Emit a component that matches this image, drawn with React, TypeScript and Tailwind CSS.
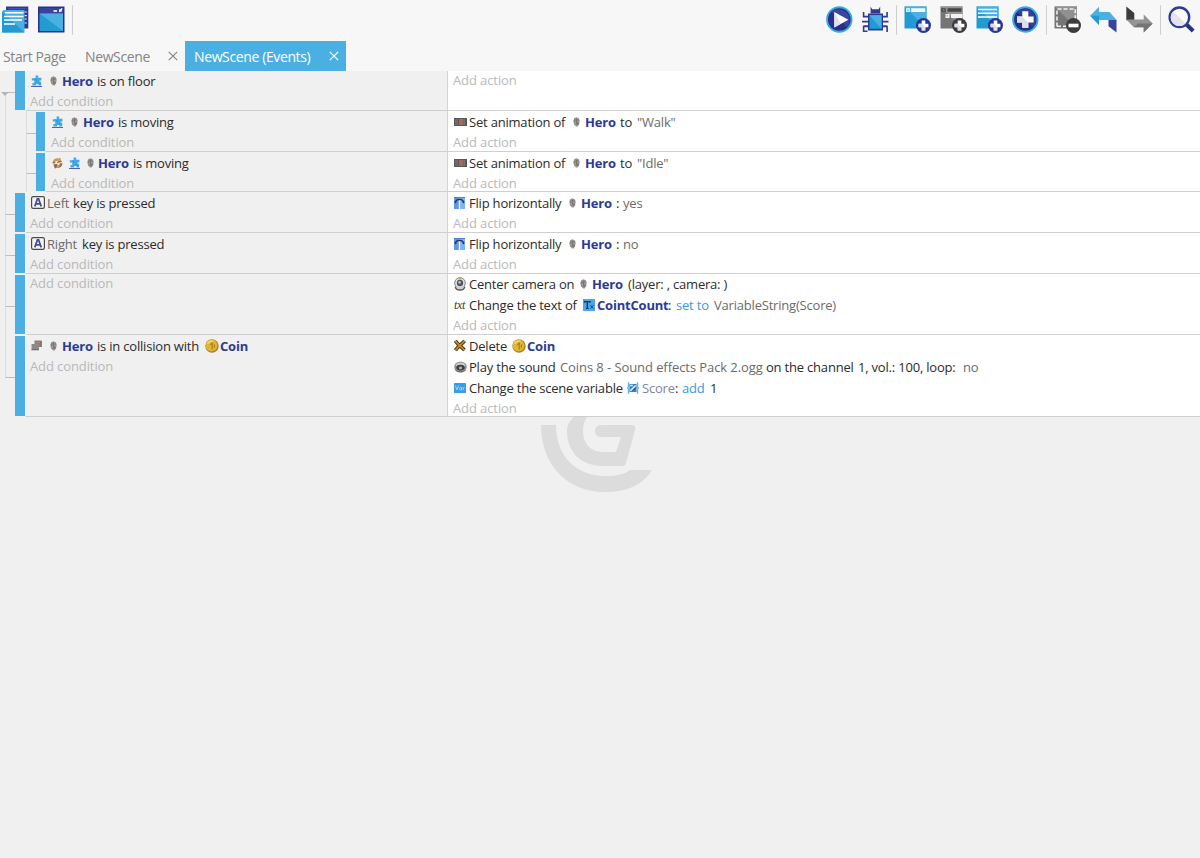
import type { ReactNode } from "react";
import clsx from "clsx";

type Tone = "text" | "object" | "param" | "file" | "operator" | "variable";

type Part = { w: string; icon?: ReactNode; text?: string; tone?: Tone };

type EventRow = {
  height: string;
  child?: boolean;
  first?: boolean;
  last?: boolean;
  conditions: Part[][];
  actions: Part[][];
};

const tones: Record<Tone, string> = {
  text: "text-[#2b2b2b]",
  object: "font-bold text-[#2c3a94]",
  param: "text-[#6b6b6b]",
  file: "text-[#6b6b6b] tracking-[-0.08px]",
  operator: "text-[#3e97dc]",
  variable: "text-[#7e84a8]",
};

/* ---------- instruction icons ---------- */

const PlatformIcon = () => (
  <svg className="w-[11px] h-3" viewBox="0 0 11 12">
    <path d="M4.6 0.4h2.6v2.4h3.2v2.6H8.6v1.4h1.6v3.8H7.4V9H5.2v1.6H1.4V8h1.8V5.6H0.8V3.2h3.8z" fill="#43a9e2" />
    <path d="M3.6 3.4l2 2.4M6.8 6.8l1.8 1.4" stroke="#2f8fd0" strokeWidth="1" />
    <path d="M0 11.5h11" stroke="#4f62ae" />
  </svg>
);

const HeroIcon = () => (
  <svg className="w-[7px] h-[10px]" viewBox="0 0 7 10">
    <path d="M1.2 1.2 3.5 0.3 6 1.5 6.7 4 6 7.5 4.6 9.4H3L1 7.2 0.3 4z" fill="#96918f" />
    <path d="M3.4 1.8v5.6M4.8 5.2v2.6" stroke="#6b6766" strokeWidth="0.8" />
    <path d="M1.6 2.6v2M5 2v2" stroke="#7b7674" strokeWidth="0.8" />
    <path d="M2 5.8h1M4.2 4.6h1" stroke="#b5aeaa" />
  </svg>
);

const InvertIcon = () => (
  <svg className="w-[11px] h-3" viewBox="0 0 11 12">
    <path d="M0.6 5.8C0.6 2.4 3.6 0.4 6.6 1.4L8 0.4l1.6 4.2-4.4 0.8 1-1.6C4.6 3.4 3.4 4.2 3.2 6z" fill="#cf9a5c" />
    <path d="M10.4 6.2c0 3.4-3 5.4-6 4.4L3 11.8 1.4 7.4l4.4-0.6-1 1.6c1.6 0.4 2.8-0.4 3-2.2z" fill="#94663f" />
    <path d="M0.6 5.8l2.6 0.2M5.2 5.4l4.4-0.8" stroke="#6f4a2a" strokeWidth="0.9" />
    <path d="M8.4 7.6C7.8 9 6.4 9.8 5 9.6" stroke="#d9a96c" fill="none" />
  </svg>
);

const KeyIcon = () => (
  <svg className="w-[14px] h-[13px]" viewBox="0 0 14 13">
    <rect x="0.6" y="0.6" width="12.8" height="11.8" rx="1.6" fill="#f6f6f8" stroke="#4a4a4e" strokeWidth="1.2" />
    <path d="M3.8 10.4 6.4 3h1.2l2.6 7.4M5 7.8h4" fill="none" stroke="#45518c" strokeWidth="1.8" />
  </svg>
);

const CollisionIcon = () => (
  <svg className="w-[11px] h-[11px]" viewBox="0 0 11 11">
    <rect x="3.5" y="0.5" width="7" height="6.5" fill="#8e7d7b" />
    <path d="M5 2.5h4" stroke="#b7886f" />
    <rect x="0.5" y="4" width="7.5" height="6" fill="#8a8a8d" />
    <path d="M0.5 9.8h7.5M10.3 1v6" stroke="#5f5c60" strokeWidth="0.8" />
  </svg>
);

const CoinIcon = () => (
  <svg className="w-[14px] h-[14px]" viewBox="0 0 14 14">
    <circle cx="7" cy="7" r="6.7" fill="#a8811d" />
    <circle cx="6.5" cy="6.5" r="5.9" fill="#dfb536" />
    <path d="M2.6 4.8C3.6 2.8 5.8 1.8 8.2 2.2" stroke="#f5e08a" strokeWidth="1.3" fill="none" />
    <path d="M5.4 5.8 7.2 4v6.4M9.4 5.4v3.4" stroke="#a67c18" fill="none" strokeWidth="1.1" />
  </svg>
);

const AnimationIcon = () => (
  <svg className="w-[13px] h-[8px]" viewBox="0 0 13 8">
    <rect width="13" height="8" fill="#5a5755" />
    <rect x="1" y="1" width="3" height="6" fill="#6d6b6a" />
    <rect x="5" y="1" width="4" height="6" fill="#96705a" />
    <rect x="9.6" y="1" width="1" height="6" fill="#8b8988" />
  </svg>
);

const FlipIcon = () => (
  <svg className="w-[11px] h-[12px]" viewBox="0 0 11 12">
    <path d="M0 0h11v12H0z" fill="#7db4f0" />
    <path d="M0 0h4.6v12H0z" fill="#5f97e0" />
    <path d="M1.4 5.6C1.6 3.4 3 2.4 5.5 2.4s3.9 1 4.1 3.2" stroke="#273457" fill="none" strokeWidth="1.4" />
    <path d="M0.4 4.6l1 2 1.4-1.8M8.2 4.8l1.4 1.8 1-2" fill="#273457" />
    <path d="M5.5 3.6V12" stroke="#e9f1fc" strokeWidth="1.3" />
    <path d="M0 0.5h11" stroke="#4b80cf" />
  </svg>
);

const CameraIcon = () => (
  <svg className="w-3 h-[14px]" viewBox="0 0 12 14">
    <circle cx="6" cy="6" r="5.3" fill="#e2e2e2" stroke="#777" strokeWidth="0.9" />
    <circle cx="6" cy="6" r="3.2" fill="#4f5560" />
    <circle cx="5.6" cy="5.4" r="1.4" fill="#aebed2" />
    <path d="M5.2 1.8h2" stroke="#d9a830" strokeWidth="1.6" />
    <path d="M1.2 9.6c0.4 2.4 1.6 3.4 4.8 3.4s4.4-1 4.8-3.4" stroke="#555" strokeWidth="1.3" fill="#cfcfcf" />
  </svg>
);

const TxtIcon = () => (
  <span className="font-['Liberation_Serif',serif] italic text-[12px] leading-none tracking-[-0.3px] text-[#3a3a3a]">txt</span>
);

const TextObjectIcon = () => (
  <svg className="w-3 h-3" viewBox="0 0 12 12">
    <rect width="12" height="12" fill="#46a8e6" />
    <path d="M1.5 3.8V2.6h5.6v1.2M4.3 2.8v6.6M3 9.3h2.6" stroke="#1c3168" strokeWidth="1.3" fill="none" />
    <path d="M7.4 6.2l3 3.4M10.4 6.2l-3 3.4" stroke="#23447f" strokeWidth="1" />
  </svg>
);

const DeleteIcon = () => (
  <svg className="w-[12px] h-[13px]" viewBox="0 0 12 13">
    <path d="M1.4 1.8c2 3 5.6 6 9.2 9.2M10.6 1.8C8 5 4.6 7 1.4 11.2" stroke="#40300f" strokeWidth="3.6" fill="none" />
    <path d="M1.4 1.8c2 3 5.6 6 9.2 9.2M10.6 1.8C8 5 4.6 7 1.4 11.2" stroke="#c98a2c" strokeWidth="1.8" fill="none" />
  </svg>
);

const SoundIcon = () => (
  <svg className="w-[13px] h-[12px]" viewBox="0 0 13 12">
    <ellipse cx="6.5" cy="6" rx="6.3" ry="5.6" fill="#909090" />
    <ellipse cx="6.5" cy="4.6" rx="4.6" ry="3" fill="#c9c9c9" />
    <ellipse cx="6.5" cy="6.6" rx="4.2" ry="2.8" fill="#3a3a3a" />
    <ellipse cx="6.5" cy="7" rx="1.9" ry="1.4" fill="#a8a8a8" />
    <path d="M1.4 9.2c2.8 2.2 7.4 2.2 10.2 0" stroke="#6a6a6a" fill="none" />
  </svg>
);

const VarIcon = () => (
  <svg className="w-[12px] h-[10px]" viewBox="0 0 12 10">
    <rect width="12" height="10" rx="0.6" fill="#3b9be3" />
    <path d="M1.4 2.6 3 7 4.6 2.6M7.6 4.4V7.2M7.6 5c-1.6-1.4-2.6 0.2-1.8 1.6 0.5 0.8 1.4 0.4 1.8-0.6M9.2 4.4v2.8M9.2 5.4c0.2-0.8 0.8-1 1.4-0.8" stroke="#a9d6f7" fill="none" strokeWidth="0.9" />
  </svg>
);

const ScoreIcon = () => (
  <svg className="w-3 h-[12px]" viewBox="0 0 12 12">
    <path d="M2.4 0.8H1.4V5L0.5 6l0.9 1v4.2h1M9.6 0.8h1V5l0.9 1-0.9 1v4.2h-1" stroke="#58b5ec" strokeWidth="1.2" fill="none" />
    <rect x="2.4" y="2" width="7.2" height="8" fill="#3f7fc9" />
    <path d="M3.4 8.8 8.6 3.4M3.2 3.6h2.6" stroke="#dff0fc" strokeWidth="1.5" />
    <path d="M5.8 8.8 9 5.6" stroke="#27407f" />
  </svg>
);

/* ---------- toolbar icons ---------- */

const PlusBadge = ({ fill = "#283593" }: { fill?: string }) => (
  <>
    <circle cx="19.5" cy="19.5" r="7.5" fill={fill} />
    <path d="M19.5 14.6v9.8M14.6 19.5h9.8" stroke="#fff" strokeWidth="3.6" />
    <path d="M14.6 17.7h3.1l3.6 3.6v3.1h-3.6v-3.1h-3.1z" fill="#dde0e8" />
  </>
);

const ProjectIcon = () => (
  <svg className="w-[27px] h-[27px]" viewBox="0 0 27 27">
    <path d="M4 0.5h22.3v22H4z" fill="#303a92" />
    <path d="M6 2.6h18.5" stroke="#4a55a8" />
    <path d="M22.5 6h2.3M22.5 9.6h2.3M22.5 13h2.3M22.5 17h2.3" stroke="#e8eefb" strokeWidth="1.2" />
    <path d="M1.5 4h21v22.5H0V5.5z" fill="#4ab0e4" />
    <path d="M0 5.5 22.5 26.5H0z" fill="#229bd2" />
    <path d="M3 6.8h18.5M2 10.4h19.5M2 14h18M2 17.9h11" stroke="#fff" strokeWidth="1.5" />
  </svg>
);

const SceneIcon = () => (
  <svg className="w-[27px] h-[27px]" viewBox="0 0 27 27">
    <path d="M0 0.5h26.5v26H0z" fill="#283087" />
    <path d="M1.5 7.5H25V25H1.5z" fill="#229bd2" />
    <path d="M1.5 7.5H25V25z" fill="#4ab0e4" />
    <path d="M1.5 2H25v5H1.5z" fill="#3a439b" />
    <path d="M15.5 5h3.5" stroke="#fff" strokeWidth="1.6" />
    <path d="M21 5.8V3h3v2.8z" fill="#a9cdf0" />
    <path d="M21.2 5.8l3-3.4" stroke="#fff" strokeWidth="1.3" />
  </svg>
);

const PlayIcon = () => (
  <svg className="w-[27px] h-[27px]" viewBox="0 0 27 27">
    <circle cx="13.3" cy="13.5" r="13.2" fill="#3aa8e4" />
    <circle cx="13.3" cy="13.5" r="11.3" fill="#283087" />
    <path d="M5.5 5.5a11.3 11.3 0 0 1 15.7 16z" fill="#3a469e" />
    <path d="M8.3 6v15.4l14-7.7z" fill="#fff" />
    <path d="M8.3 6v15.4l6.5-3.6z" fill="#dde0e8" />
  </svg>
);

const DebugIcon = () => (
  <svg className="w-[27px] h-[27px]" viewBox="0 0 27 27">
    <path d="M9 10.6H1.6V6M9 15.6H0M9 20H1.6M8 20.5V20M6.5 20.5H1.6V26M5.5 25.3H0.8M17.5 10.6h7.6V6M17.5 15.6h9M17.5 20h7.6M20 20.5h5.1V26" fill="none" stroke="#303a92" strokeWidth="1.6" />
    <path d="M8.6 0.5l1.6 2.8h6.4l1.6-2.8v7H8.6z" fill="#303a92" />
    <path d="M6 7.5h15v17H6z" fill="#303a92" />
    <path d="M7.5 9.2h12v13.6h-12z" fill="#229bd2" />
    <path d="M7.5 9.2h12v13.6z" fill="#4ab0e4" />
  </svg>
);

const AddEventIcon = () => (
  <svg className="w-[27px] h-[27px]" viewBox="0 0 27 27">
    <path d="M0.5 0.5h22V22.5H0.5z" fill="#229bd2" />
    <path d="M0.5 0.5h22V22.5z" fill="#4ab0e4" />
    <path d="M2 2.2h4v3.8H2zM7.2 2.2h14v3.8h-14z" fill="#f1f9fd" />
    <path d="M3.2 3.4h1.6v1.4H3.2z" fill="#4ab0e4" />
    <PlusBadge />
  </svg>
);

const AddSubEventIcon = () => (
  <svg className="w-[27px] h-[27px]" viewBox="0 0 27 27">
    <path d="M0.5 0.5h22V22.5H0.5z" fill="#757575" />
    <path d="M0.5 0.5h22V22.5z" fill="#949494" />
    <path d="M1.4 2.2h4.4v3.6H1.4zM7.5 2.2h14v3.6h-14z" fill="#454545" />
    <path d="M2.8 3.5h1.8v1H2.8z" fill="#aaa" />
    <path d="M5.5 8h4v4h-4zM11 8h11.5v4H11z" fill="#f2f2f2" />
    <path d="M6.5 9h1.5v1.6H6.5z" fill="#aaa" />
    <PlusBadge fill="#3c3c3c" />
  </svg>
);

const AddCommentIcon = () => (
  <svg className="w-[27px] h-[27px]" viewBox="0 0 27 27">
    <path d="M0.5 0.5h22V22.5H0.5z" fill="#229bd2" />
    <path d="M0.5 0.5h22V22.5z" fill="#4ab0e4" />
    <path d="M2 3.5h19M2 7.3h19M2 11h19" stroke="#fff" strokeWidth="1.6" />
    <PlusBadge />
  </svg>
);

const AddIcon = () => (
  <svg className="w-[27px] h-[27px]" viewBox="0 0 27 27">
    <circle cx="13.3" cy="13.5" r="13.2" fill="#3aa8e4" />
    <circle cx="13.3" cy="13.5" r="11.2" fill="#283087" />
    <path d="M5.4 5.6a11.2 11.2 0 0 1 15.8 15.8z" fill="#35419a" />
    <path d="M10.3 5.2h6v5.3h5.3v6h-5.3v5.3h-6v-5.3H5v-6h5.3z" fill="#fff" />
    <path d="M5 10.5h5.3l6 6v5.3h-6v-5.3H5z" fill="#dde0e8" />
  </svg>
);

const RemoveIcon = () => (
  <svg className="w-[27px] h-[27px]" viewBox="0 0 27 27">
    <path d="M0.5 0.5h22.5V22.5H0.5z" fill="#757575" />
    <path d="M0.5 0.5h22.5V22.5z" fill="#909090" />
    <path d="M3 20.5V3h18.3v14M3 20.3h10" fill="none" stroke="#f0f0f0" strokeWidth="1.6" strokeDasharray="4 2" />
    <circle cx="19.5" cy="19.5" r="7.5" fill="#3c3c3c" />
    <path d="M14.5 19.5h10" stroke="#fff" strokeWidth="3.6" />
  </svg>
);

const UndoIcon = () => (
  <svg className="w-[27px] h-[27px]" viewBox="0 0 27 27">
    <path d="M18.5 13.8h8V26.5l-8-6.3z" fill="#3a439b" />
    <path d="M0.2 9.8 9 0.8V6h10.5l7 8H9v5z" fill="#4ab0e4" />
    <path d="M0.2 9.8H9v9.2z" fill="#229bd2" />
  </svg>
);

const RedoIcon = () => (
  <svg className="w-[27px] h-[27px]" viewBox="0 0 27 27">
    <path d="M0.3 0.5 8.3 7v7.2H0.3z" fill="#3c3c3c" />
    <path d="M0.3 13.4h17.4V8.5l9 9-9 9v-5.2H7.8z" fill="#949494" />
    <path d="M12 17.4h14.7l-9 9v-5.2H7.8z" fill="#757575" />
  </svg>
);

const SearchIcon = () => (
  <svg className="w-[27px] h-[27px]" viewBox="0 0 27 27">
    <path d="M18.5 18.5 25.2 25" stroke="#283087" strokeWidth="4" />
    <circle cx="11.4" cy="11.3" r="9.8" fill="#fbfbfc" stroke="#303a92" strokeWidth="2.4" />
    <path d="M5.2 5.2a8.5 8.5 0 1 0 12.3 12.3z" fill="#e2e4ea" />
  </svg>
);

/* ---------- events ---------- */

const t = (text: string, w: string, tone: Tone = "text"): Part => ({ text, w, tone });
const i = (icon: ReactNode, w: string): Part => ({ icon, w });

const events: EventRow[] = [
  {
    height: "h-10",
    first: true,
    conditions: [[i(<PlatformIcon />, "w-[15px]"), i(<HeroIcon />, "w-4"), t("Hero", "w-[35px]", "object"), t("is on floor", "w-[70px]")]],
    actions: [],
  },
  {
    height: "h-[41px]",
    child: true,
    conditions: [[i(<PlatformIcon />, "w-[15px]"), i(<HeroIcon />, "w-4"), t("Hero", "w-[35px]", "object"), t("is moving", "w-[70px]")]],
    actions: [[i(<AnimationIcon />, "w-[15px]"), t("Set animation of", "w-[99px]"), i(<HeroIcon />, "w-[17px]"), t("Hero", "w-[35px]", "object"), t("to", "w-[17px]"), t('"Walk"', "w-12", "param")]],
  },
  {
    height: "h-10",
    child: true,
    conditions: [[i(<InvertIcon />, "w-[15px]"), i(<PlatformIcon />, "w-4"), i(<HeroIcon />, "w-[15px]"), t("Hero", "w-[35px]", "object"), t("is moving", "w-[70px]")]],
    actions: [[i(<AnimationIcon />, "w-[15px]"), t("Set animation of", "w-[99px]"), i(<HeroIcon />, "w-[17px]"), t("Hero", "w-[35px]", "object"), t("to", "w-[17px]"), t('"Idle"', "w-12", "param")]],
  },
  {
    height: "h-[41px]",
    conditions: [[i(<KeyIcon />, "w-[16px]"), t("Left", "w-[26px]", "param"), t("key is pressed", "w-[90px]")]],
    actions: [[i(<FlipIcon />, "w-[15px]"), t("Flip horizontally", "w-[96px]"), i(<HeroIcon />, "w-4"), t("Hero", "w-[35px]", "object"), t(":", "w-[7px]"), t("yes", "w-8", "param")]],
  },
  {
    height: "h-[41px]",
    conditions: [[i(<KeyIcon />, "w-[16px]"), t("Right", "w-[35px]", "param"), t("key is pressed", "w-[90px]")]],
    actions: [[i(<FlipIcon />, "w-[15px]"), t("Flip horizontally", "w-[96px]"), i(<HeroIcon />, "w-4"), t("Hero", "w-[35px]", "object"), t(":", "w-[7px]"), t("no", "w-8", "param")]],
  },
  {
    height: "h-[61px]",
    conditions: [],
    actions: [
      [i(<CameraIcon />, "w-[15px]"), t("Center camera on", "w-[107px]"), i(<HeroIcon />, "w-4"), t("Hero", "w-[36px]", "object"), t("(layer: , camera: )", "w-[120px]")],
      [i(<TxtIcon />, "w-[15px]"), t("Change the text of", "w-[112px]"), i(<TextObjectIcon />, "w-4"), t("CointCount", "w-[71px]", "object"), t(":", "w-[8px]"), t("set to", "w-[38px]", "operator"), t("VariableString(Score)", "w-[130px]", "param")],
    ],
  },
  {
    height: "h-[82px]",
    last: true,
    conditions: [[i(<CollisionIcon />, "w-[15px]"), i(<HeroIcon />, "w-4"), t("Hero", "w-[35px]", "object"), t("is in collision with", "w-[107px]"), i(<CoinIcon />, "w-[16px]"), t("Coin", "w-10", "object")]],
    actions: [
      [i(<DeleteIcon />, "w-[15px]"), t("Delete", "w-[42px]"), i(<CoinIcon />, "w-[16px]"), t("Coin", "w-10", "object")],
      [i(<SoundIcon />, "w-[15px]"), t("Play the sound", "w-[91px]"), t("Coins 8 - Sound effects Pack 2.ogg", "w-[206px]", "file"), t("on the channel", "w-[92px]"), t("1, vol.: 100, loop:", "w-[105px]"), t("no", "w-6", "param")],
      [i(<VarIcon />, "w-[15px]"), t("Change the scene variable", "w-[156px]"), i(<ScoreIcon />, "w-[17px]"), t("Score", "w-[33px]", "variable"), t(":", "w-[7px]"), t("add", "w-[28px]", "operator"), t("1", "w-4")],
    ],
  },
];

function Instruction({ parts }: { parts: Part[] }) {
  return (
    <div className="flex h-[21px] items-center whitespace-nowrap pl-px">
      {parts.map((part, index) =>
        part.icon ? (
          <span key={index} className={clsx("flex shrink-0 items-center", index === 0 ? "justify-start" : "justify-center pr-px", part.w)}>
            {part.icon}
          </span>
        ) : (
          <span key={index} className={clsx("shrink-0", part.w, tones[part.tone ?? "text"])}>
            {part.text}
          </span>
        )
      )}
    </div>
  );
}

function Instructions({ lines, addLabel }: { lines: Part[][]; addLabel: string }) {
  return (
    <>
      {lines.map((parts, index) => (
        <Instruction key={index} parts={parts} />
      ))}
      <div className="flex h-[19px] items-center tracking-[-0.1px] text-[#b9b9b9]">{addLabel}</div>
    </>
  );
}

/* One step of the tree: a vertical guide with a branch at mid height */
function Branch({ first, last }: { first?: boolean; last?: boolean }) {
  return (
    <div className="flex w-[10px] shrink-0 flex-col">
      <div className={clsx("h-[22px] grow border-b border-l border-b-[#bdbdbd]", first ? "border-l-transparent" : "border-l-[#dedede]")} />
      <div className={clsx("h-[18px] grow border-l", last ? "border-l-transparent" : "border-l-[#dedede]")} />
    </div>
  );
}

function EventLine({ row }: { row: EventRow }) {
  // The scrolled first row and the two-line row sit one pixel higher than the rest
  const lift = row.first || row.conditions.length === 0;

  return (
    <div className={clsx("flex", row.height)}>
      {row.child ? (
        <>
          <div className="ml-[5px] w-[20px] shrink-0 border-l border-[#dedede]" />
          <div className="flex w-[11px] shrink-0 pl-px">
            <Branch />
          </div>
        </>
      ) : (
        <div className="relative flex w-[15px] shrink-0 pl-[5px]">
          <Branch first={row.first} last={row.last} />
          {row.first && (
            <svg className="absolute left-[1px] top-[21px] h-1 w-2" viewBox="0 0 8 4">
              <path d="M0 0h8L4 4z" fill="#b5b5b5" />
            </svg>
          )}
        </div>
      )}
      <div className={clsx("shrink-0 bg-[#4ab0e4]", row.child ? "w-[9px]" : "w-[10px]", row.first ? "mb-px" : "my-px")} />
      <div className={clsx("flex shrink-0 border-b border-l border-b-[#cfcfcf] border-l-[#fafafa]", row.child ? "w-[402px] pl-[5px]" : "w-[422px] pl-1")}>
        <div className={clsx(lift && "-mt-px")}>
          <Instructions lines={row.conditions} addLabel="Add condition" />
        </div>
      </div>
      <div className="flex min-w-0 grow border-b border-l border-b-[#cfcfcf] border-l-[#d4d4d4] bg-white pl-[5px]">
        <div className={clsx(lift && "-mt-px")}>
          <Instructions lines={row.actions} addLabel="Add action" />
        </div>
      </div>
    </div>
  );
}

const ToolButton = ({ children }: { children: ReactNode }) => (
  <button className="flex w-9 shrink-0 items-center justify-center">{children}</button>
);

const Separator = () => (
  <div className="flex w-[6px] shrink-0 justify-center">
    <div className="h-[30px] w-px bg-[#d0d0d0]" />
  </div>
);

const CloseIcon = () => (
  <svg className="h-[10px] w-[10px]" viewBox="0 0 10 10">
    <path d="M0.8 0.8l8.4 8.4M9.2 0.8L0.8 9.2" stroke="currentColor" strokeWidth="1.2" />
  </svg>
);

function Toolbar() {
  return (
    <div className="flex h-[41px] items-center justify-between pb-[2px] pr-px">
      <div className="-ml-[3px] flex items-center">
        <ToolButton><ProjectIcon /></ToolButton>
        <ToolButton><SceneIcon /></ToolButton>
        <Separator />
      </div>
      <div className="flex items-center">
        <ToolButton><PlayIcon /></ToolButton>
        <ToolButton><DebugIcon /></ToolButton>
        <Separator />
        <ToolButton><AddEventIcon /></ToolButton>
        <ToolButton><AddSubEventIcon /></ToolButton>
        <ToolButton><AddCommentIcon /></ToolButton>
        <ToolButton><AddIcon /></ToolButton>
        <Separator />
        <ToolButton><RemoveIcon /></ToolButton>
        <ToolButton><UndoIcon /></ToolButton>
        <ToolButton><RedoIcon /></ToolButton>
        <Separator />
        <ToolButton><SearchIcon /></ToolButton>
      </div>
    </div>
  );
}

function Tabs() {
  return (
    <div className="flex h-[30px] text-[14px] tracking-[-0.38px] text-[#858585]">
      <div className="flex w-[82px] items-center whitespace-nowrap pl-[3px] pt-px">Start Page</div>
      <div className="flex w-[103px] items-center justify-between whitespace-nowrap pl-[3px] pr-[7px]">
        <span className="pt-px">NewScene</span>
        <CloseIcon />
      </div>
      <div className="flex w-[161px] items-center justify-between whitespace-nowrap bg-[#4ab0e4] pl-[9px] pr-[7px] text-white">
        <span className="pt-px">NewScene (Events)</span>
        <CloseIcon />
      </div>
    </div>
  );
}

export default function App() {
  return (
    <div className="h-[858px] w-[1200px] overflow-hidden bg-[#f0f0f0] font-['Open_Sans','Noto_Sans',sans-serif] text-[13px] leading-[18px] tracking-[-0.2px]">
      <div className="bg-[#f7f7f7]">
        <Toolbar />
        <Tabs />
      </div>
      {events.map((row, index) => (
        <EventLine key={index} row={row} />
      ))}
      <div className="pl-[541px]">
        <svg className="h-[75px] w-[112px]" viewBox="0 0 112 75">
          <path d="M0 8H15C15 40 36 59 64 59C77 59 83 57 89 53H111C102 68 86 75 64 75C26 75 0 48 0 8z" fill="#dcdcdc" />
          <path d="M33 0H46C43 4 42 9 42 14C42 27 50 35 62 35H75L80 20H60C52 20 52 8 60 8H90C94 8 95 10 94 13L85 46C84 49 83 49 80 49H62C40 49 26 35 26 14C26 9 28 4 33 0z" fill="#dcdcdc" />
        </svg>
      </div>
    </div>
  );
}
